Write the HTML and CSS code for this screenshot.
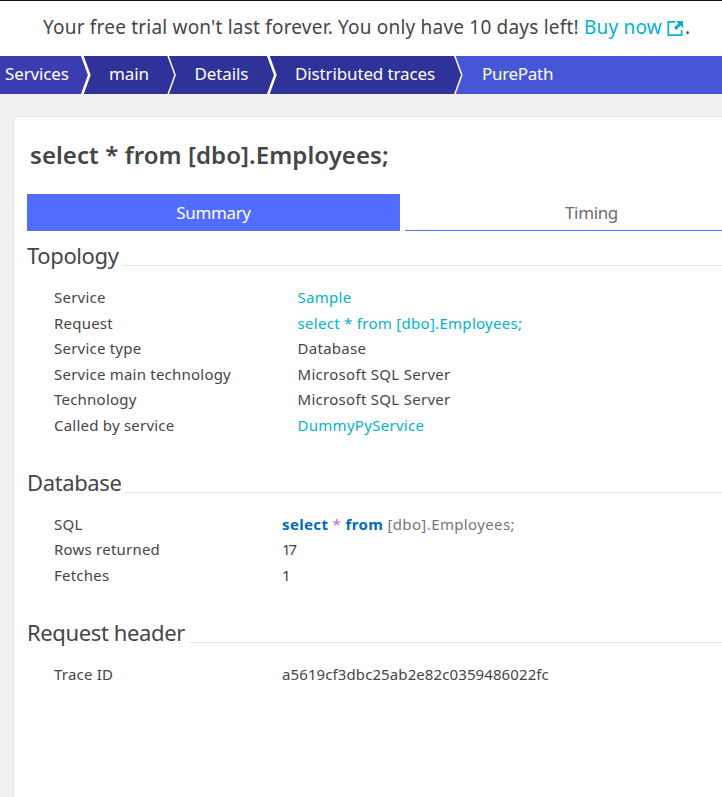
FILE: index.html
```
<!DOCTYPE html>
<html lang="en">
<head>
<meta charset="utf-8">
<title>PurePath</title>
<link rel="stylesheet" href="styles.css">
</head>
<body>
<div class="trial">Your free trial won't last forever. You only have 10 days left! <a>Buy now</a>
<svg class="ext" width="17" height="17" viewBox="0 0 17 17"><path d="M8 1.800H1.300v13.400h13.400V10" fill="none" stroke="currentColor" stroke-width="1.700"/><path d="M9 1h7v7l-2.400-2.400L9.200 10 7 7.800l4.400-4.400z" fill="currentColor"/></svg><span class="stop">.</span></div>
<nav class="crumbs">
<a class="crumb first">Services</a>
<svg class="sep" width="12" height="38" viewBox="0 0 12 38"><path class="f-first" d="M0 0h2l7.500 19-7.500 19H0z"/><path class="edge thick" d="M2 -1 9.300 19 2 39"/></svg>
<a class="crumb main">main</a>
<svg class="sep" width="12" height="38" viewBox="0 0 12 38"><path class="edge" d="M1.800 -1 9.100 19 1.800 39"/></svg>
<a class="crumb details">Details</a>
<svg class="sep" width="12" height="38" viewBox="0 0 12 38"><path class="edge thick" d="M2 -1 9.300 19 2 39"/></svg>
<a class="crumb traces">Distributed traces</a>
<svg class="sep to-last" width="12" height="38" viewBox="0 0 12 38"><path class="f-mid" d="M0 0h1.500l7.500 19-7.500 19H0z"/><path class="edge" d="M1.500 -1 8.800 19 1.500 39"/></svg>
<a class="crumb last">PurePath</a>
</nav>
<main class="card">
<h1>select * from [dbo].Employees;</h1>
<div class="tabs"><div class="tab active">Summary</div><div class="tab">Timing</div></div>
<section><h2>Topology</h2>
<dl class="wide">
<dt>Service</dt><dd><a>Sample</a></dd>
<dt>Request</dt><dd><a>select * from [dbo].Employees;</a></dd>
<dt>Service type</dt><dd>Database</dd>
<dt>Service main technology</dt><dd>Microsoft SQL Server</dd>
<dt>Technology</dt><dd>Microsoft SQL Server</dd>
<dt>Called by service</dt><dd><a>DummyPyService</a></dd>
</dl></section>
<section><h2>Database</h2>
<dl>
<dt>SQL</dt><dd class="sql"><b>select</b> <i>*</i> <b>from</b> [dbo]<em>.</em>Employees;</dd>
<dt>Rows returned</dt><dd class="count">17</dd>
<dt>Fetches</dt><dd class="count">1</dd>
</dl></section>
<section><h2>Request header</h2>
<dl><dt>Trace ID</dt><dd class="hash">a5619cf3dbc25ab2e82c0359486022fc</dd></dl></section>
</main>
</body>
</html>
```
FILE: styles.css
```
* { box-sizing: border-box; }
body { margin: 0; height: 797px; overflow: hidden; background: #f1f1f1; color: #454646; font: 15px/25.5px "Noto Sans", sans-serif; display: flex; flex-direction: column; }
a { color: #00b4cc; }
.trial { height: 56px; flex: none; border-top: 1px solid #111; background: #fff; padding-left: 43px; font-size: 19px; line-height: 52px; letter-spacing: 0.2px; white-space: nowrap; }
.ext { color: #00b4cc; vertical-align: -3px; }
.stop { margin-left: 1px; }
.crumbs { height: 38px; flex: none; display: flex; background: #2f3299; font-size: 17px; line-height: 36px; letter-spacing: -0.13px; white-space: nowrap; }
.crumb { color: #fff; flex: none; padding-left: 17px; }
.first { width: 80px; padding-left: 5px; background: #3b3cb0; }
.main { width: 74px; }
.details { width: 88px; padding-left: 16.5px; }
.traces { width: 175px; }
.last { flex: 1; background: #4556d7; letter-spacing: -0.3px; }
.sep { flex: none; display: block; }
.to-last { background: #4556d7; }
.f-first { fill: #3b3cb0; }
.f-mid { fill: #2f3299; }
.edge { fill: none; stroke: #fff; stroke-width: 1.5; }
.thick { stroke-width: 2.6; }
.card { flex: 1; margin: 22px 0 0 13px; padding-left: 13px; border: 1px solid #e4e4e4; border-width: 1px 0 0 1px; border-radius: 5px 0 0 0; background: #fff; overflow: hidden; }
h1 { margin: 0; padding: 20px 0 0 3px; height: 77px; font-size: 24px; line-height: 36px; font-weight: 600; letter-spacing: 0.07px; }
.tabs { display: grid; grid-template-columns: 373px 373px; gap: 5px; }
.tab { height: 37px; border-bottom: 1px solid #526cff; text-align: center; font-size: 17px; line-height: 37px; letter-spacing: -0.35px; color: #6d6d6d; }
.active { background: #526cff; color: #fff; }
section { height: 227px; }
section + section { height: 150px; }
h2 { margin: 0; padding-top: 9px; height: 54px; font-size: 22px; line-height: 30px; font-weight: 400; letter-spacing: -0.38px; display: flex; white-space: nowrap; }
h2::after { content: ""; flex: 1; height: 25px; margin-left: 4px; border-bottom: 1px solid #e4e4e4; }
dl { margin: -0.2px 0 0 27px; display: grid; grid-template-columns: 228px 1fr; grid-auto-rows: 25.5px; white-space: nowrap; letter-spacing: 0.22px; }
.wide { margin-top: 0; grid-template-columns: 243.5px 1fr; }
dd { margin: 0; letter-spacing: 0.29px; }
.sql { color: #767676; letter-spacing: 0.36px; }
.sql b { color: #006bba; }
.sql i { font-style: normal; color: #b06fd0; }
.sql em { font-style: normal; font-weight: 700; color: #a6a6ff; }
.count { letter-spacing: -2px; }
.hash { letter-spacing: 0.1px; }
```
